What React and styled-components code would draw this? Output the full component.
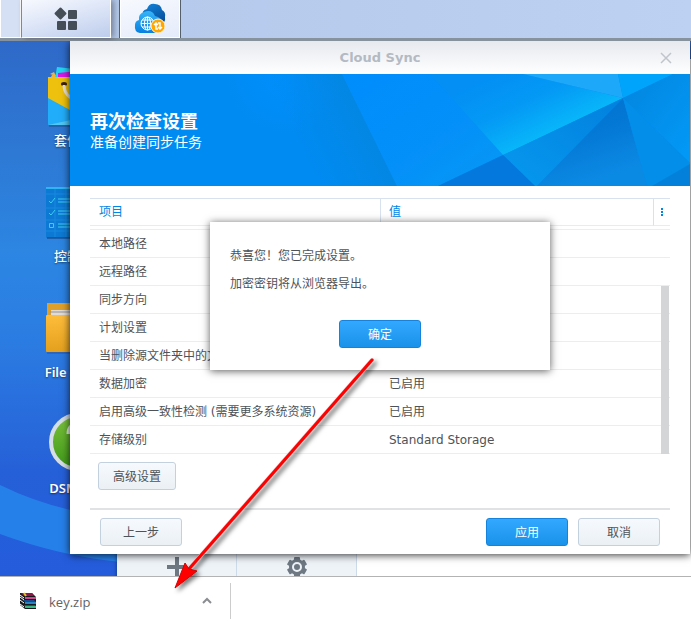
import React, { Component } from 'react';
import styled, { createGlobalStyle } from 'styled-components';

const GlobalStyle = createGlobalStyle`
  * {
    box-sizing: border-box;
  }

  body {
    margin: 0;
    background: #fff;
    color: #4d5359;
    font-family: 'DejaVu Sans', 'Noto Sans CJK SC', sans-serif;
    font-size: 12px;
    line-height: 16px;
  }

  button {
    font: inherit;
    color: inherit;
    padding: 0;
    cursor: pointer;
  }
`;

const Page = styled.div`
  position: relative;
  display: flex;
  flex-direction: column;
  min-height: 100vh;
`;

const Taskbar = styled.nav`
  display: flex;
  height: 41px;
  background: linear-gradient(90deg, #b3c8ea, #bdd2f2);
  border-bottom: 3px solid #87929f;
`;

const TaskGrip = styled.div`
  width: 21px;
  border: solid #fff;
  border-width: 0 1px 1px;
  background: #d5e0f5;
`;

const TaskButton = styled.button`
  display: flex;
  align-items: center;
  justify-content: center;
  width: 90px;
  margin-right: 8px;
  border: solid #fff;
  border-width: 0 1px 1px;
  border-left-color: #7e8899;
  background: linear-gradient(165deg, #f7f9fe, #dbe4f7 50%, #becdec);
  box-shadow: 3px 0 6px rgba(0, 0, 0, 0.35);
`;

const ActiveTaskButton = styled(TaskButton)`
  width: 62px;
  border: solid #555e6b;
  border-width: 0 1px;
  background: linear-gradient(165deg, #f7f9fe, #e4ebfa);
  box-shadow: inset 1px -1px #fff, inset -1px 0 #fff;
`;

const Desktop = styled.main`
  position: relative;
  flex: 1;
  overflow: hidden;
  background: linear-gradient(180deg, #2f69c8 0, #2d79d4 110px, #2c86e2 210px, #2b7ce2 300px, #2660d8 430px, #245cdc 100%);
`;

const Wallpaper = styled.svg`
  position: absolute;
  left: 0;
  bottom: 0;
`;

const Shortcuts = styled.ul`
  position: absolute;
  top: 20px;
  left: 40px;
  width: 80px;
  margin: 0;
  padding: 0;
  list-style: none;
`;

const Shortcut = styled.li`
  display: flex;
  flex-direction: column;
  align-items: center;
  gap: 5px;
  height: 116px;
  color: #fff;
  font-family: 'Noto Sans', 'Noto Sans CJK SC', sans-serif;
  font-size: 13px;
  font-weight: 500;
  white-space: nowrap;
  text-shadow: 0 1px 2px rgba(0, 0, 0, 0.5);

  &:lang(en) {
    font-weight: 600;
  }
`;

const BackWindow = styled.div`
  position: absolute;
  top: 18px;
  right: 0;
  bottom: -6px;
  left: 117px;
  display: flex;
  align-items: flex-end;
  background: #fff;
  box-shadow: 0 0 4px rgba(0, 0, 0, 0.5);
`;

const ToolCell = styled.button`
  display: flex;
  align-items: center;
  justify-content: center;
  width: 120px;
  height: 30px;
  border: none;
  border-right: 1px solid #cddaea;
  background: #eef3f8;
`;

const Window = styled.section`
  position: relative;
  margin: 0 1px 22px 70px;
  background: #fff;
  box-shadow: 0 1px 8px rgba(0, 0, 0, 0.8);
`;

const TitleBar = styled.header`
  position: relative;
  display: flex;
  align-items: center;
  justify-content: center;
  height: 33px;
  background: linear-gradient(#e6e9ef, #fff);
`;

const WindowTitle = styled.h1`
  margin: 0;
  color: #b3bac3;
  font-size: 13px;
`;

const CloseButton = styled.button`
  position: absolute;
  right: 18px;
  display: flex;
  border: none;
  background: none;
`;

const Banner = styled.div`
  position: relative;
  display: flex;
  flex-direction: column;
  justify-content: center;
  height: 112px;
  padding: 4px 20px 0;
  background: #008bf2;
  color: #fff;
`;

const BannerArt = styled.svg`
  position: absolute;
  inset: 0;
  width: 100%;
  height: 100%;
`;

const BannerTitle = styled.h2`
  position: relative;
  margin: 0;
  font-size: 18px;
  line-height: 20px;
`;

const BannerText = styled.p`
  position: relative;
  margin: 0;
  font-size: 14px;
  line-height: 20px;
`;

const Content = styled.div`
  padding: 12px 20px 8px;
`;

const TableWrap = styled.div`
  position: relative;
`;

const Table = styled.table`
  width: 100%;
  table-layout: fixed;
  border-collapse: separate;
  border-spacing: 0;
`;

const HeadCell = styled.th`
  width: ${({ $width }) => $width || 'auto'};
  height: 28px;
  padding: 0 ${({ $divided }) => ($divided ? '8px' : '9px')};
  border: solid #d8e2ee;
  border-width: 1px 0 1px ${({ $divided }) => ($divided ? '1px' : '0')};
  border-bottom-color: #e8ecf0;
  color: #0086e5;
  font-weight: normal;
  text-align: left;
`;

const MenuCell = styled(HeadCell)`
  padding: 0 0 0 6px;
`;

const MenuButton = styled.button`
  display: flex;
  border: none;
  background: none;
`;

const Spacer = styled.td`
  height: 4px;
  padding: 0;
  border-bottom: 1px solid #ebeef1;
`;

const Cell = styled.td`
  height: 28px;
  padding: 0 9px;
  border-bottom: 1px solid #ebeef1;
  white-space: nowrap;
`;

const ScrollThumb = styled.div`
  position: absolute;
  right: 1px;
  bottom: 0;
  width: 8px;
  height: 168px;
  background: #d3d5d7;
`;

const Button = styled.button`
  width: ${({ $narrow }) => ($narrow ? '78px' : '82px')};
  height: 28px;
  padding-top: 2px;
  border: 1px solid ${({ $primary }) => ($primary ? '#1583db' : '#c3d0de')};
  border-radius: 3px;
  background: ${({ $primary }) => ($primary
    ? 'linear-gradient(#33a8ff, #1a92ea)'
    : 'linear-gradient(#f6faff, #ebf0f5)')};
  color: ${({ $primary }) => ($primary ? '#fff' : '#4d5359')};
`;

const Advanced = styled.div`
  padding: 8px 8px 18px;
`;

const Footer = styled.footer`
  display: flex;
  gap: 10px;
  padding: 8px 10px 0;
  border-top: 2px solid #e0e2e4;
`;

const Push = styled.div`
  flex: 1;
`;

const Dialog = styled.div`
  position: absolute;
  top: 181px;
  left: calc(50% - 170px);
  width: 340px;
  padding: 20px 20px 22px;
  background: #fff;
  box-shadow: 0 1px 8px rgba(0, 0, 0, 0.65);
`;

const Message = styled.p`
  margin: 0;
  line-height: 28px;
`;

const DialogActions = styled.div`
  display: flex;
  justify-content: center;
  padding-top: 22px;
`;

const DownloadBar = styled.footer`
  display: flex;
  height: 49px;
  padding: 6px 0;
  border-top: 1px solid #b3b3b3;
  background: #fff;
`;

const Download = styled.div`
  display: flex;
  align-items: center;
  justify-content: space-between;
  width: 231px;
  padding: 0 17px 0 19px;
  border-right: 1px solid #ccc;
`;

const FileLink = styled.a`
  display: flex;
  align-items: flex-end;
  gap: 12px;
  color: #5f6368;
  font-family: 'Open Sans', sans-serif;
  font-size: 13px;
  text-decoration: none;
`;

const PlainButton = styled.button`
  display: flex;
  border: none;
  background: none;
`;

const Arrow = styled.svg`
  position: absolute;
  top: 350px;
  left: 165px;
  pointer-events: none;
`;

const rows = [
  ['本地路径', ''],
  ['远程路径', ''],
  ['同步方向', ''],
  ['计划设置', ''],
  ['当删除源文件夹中的文件', ''],
  ['数据加密', '已启用'],
  ['启用高级一致性检测 (需要更多系统资源)', '已启用'],
  ['存储级别', 'Standard Storage'],
];

const MenuIcon = () => (
  <svg width="24" height="24" viewBox="0 0 24 24" fill="#454d57">
    <rect x="2" y="2" width="9" height="9" rx="1" transform="rotate(45 6.500 6.500)" />
    <rect x="14" y="3" width="9" height="9" rx="1" />
    <rect x="3" y="14" width="9" height="9" rx="1" />
    <rect x="14" y="14" width="9" height="9" rx="1" />
  </svg>
);

const CloudIcon = () => (
  <svg width="32" height="32" viewBox="0 0 32 32">
    <defs>
      <linearGradient id="cloudFront" x2="0" y2="1">
        <stop offset="0" stopColor="#36b5f8" />
        <stop offset="1" stopColor="#087fe0" />
      </linearGradient>
      <linearGradient id="cloudBack" x2="0.600" y2="1">
        <stop offset="0" stopColor="#1286dd" />
        <stop offset="1" stopColor="#07509f" />
      </linearGradient>
    </defs>
    <path d="M9 14Q7 7 13 6Q15 0 21 1Q27 1 28 7Q32 9 31 14Q32 20 26 21Z" fill="url(#cloudBack)" />
    <path d="M6 30Q0 29 1 22Q1 18 5 17Q4 11 10 9Q18 6 21 13Q28 14 28 21Q29 29 22 30Z" fill="url(#cloudFront)" />
    <g fill="none" stroke="#fff" strokeWidth="1">
      <circle cx="13.500" cy="20.500" r="6.500" />
      <ellipse cx="13.500" cy="20.500" rx="3" ry="6.500" />
      <path d="M13.500 14v13M7 20.500h13M8 17h11M8 24h11" />
    </g>
    <circle cx="24" cy="23" r="7" fill="#ffa700" stroke="#fff2d2" />
    <path d="M20 22l2-2 2 2M22 20v6h2M28 24l-2 2-2-2M26 26v-6h-2" fill="none" stroke="#fff" strokeWidth="1.500" />
  </svg>
);

const PackageIcon = () => (
  <svg width="64" height="66" viewBox="0 0 64 66">
    <path d="M2 13l4-2 2 4M4 14h4v4H2z" fill="#efb43a" />
    <path d="M9 6l44 5v12H6z" fill="#23d4f2" />
    <path d="M10 12l40-4v12H10z" fill="#d818e8" />
    <rect x="0" y="16" width="64" height="48" rx="1" fill="#22adfa" />
    <path d="M0 16h64v42L22 49L0 37z" fill="#edc10d" />
    <path d="M64 50L0 64h64z" fill="#50c7f5" />
    <ellipse cx="16" cy="23" rx="3" ry="2" fill="#3b2110" />
    <path d="M16 24C16 30 20 39 31 39S47 30 47 24" fill="none" stroke="#e9e2d4" strokeWidth="3" />
    <path d="M1 65h63" stroke="#18518e" />
  </svg>
);

const ControlIcon = () => (
  <svg width="68" height="66" viewBox="0 0 68 66">
    <rect y="10" width="68" height="51" rx="1" fill="#0c79d4" />
    <path d="M0 11h68" stroke="#30b5f3" strokeWidth="2" />
    <path d="M0 17h68M0 31h68M0 43h68M0 54h68M9 12v48M20 12v48" stroke="#168ae0" />
    <g fill="none" stroke="#3ccdf0" strokeWidth="1">
      <path d="M3 24l2 2 4-5M12 22h30M12 25h24M3 36l2 2 4-5M12 34h30M12 37h24M3.500 46.500h4v4h-4zM12 47h30M12 50h24" />
    </g>
    <path d="M1 61h67" stroke="#0b3d7b" />
  </svg>
);

const FolderIcon = () => (
  <svg width="68" height="66" viewBox="0 0 68 66">
    <defs>
      <linearGradient id="folder" x2="0" y2="1">
        <stop offset="0" stopColor="#ffbd3c" />
        <stop offset="1" stopColor="#e2a01d" />
      </linearGradient>
    </defs>
    <path d="M1 10h27l3 4h36v14H1z" fill="#dfa02a" />
    <path d="M5 17h60v7H5z" fill="#dedbd8" />
    <path d="M4 19h62" stroke="#9b938c" />
    <rect y="22" width="68" height="37" rx="1" fill="url(#folder)" />
    <path d="M1 60h66" stroke="#31539a" />
  </svg>
);

const HelpIcon = () => (
  <svg width="62" height="66" viewBox="0 0 62 66">
    <defs>
      <linearGradient id="help" x2="0" y2="1">
        <stop offset="0" stopColor="#7cc23c" />
        <stop offset="1" stopColor="#3d9718" />
      </linearGradient>
    </defs>
    <circle cx="29" cy="34" r="28" fill="#24549b" />
    <circle cx="29" cy="33" r="27" fill="url(#help)" stroke="#d5dee7" strokeWidth="4" />
    <path d="M20 25q0-9 9-9 9 0 9 8 0 5-6 8-3 2-3 7M29 44v5" fill="none" stroke="#e9f2e4" strokeWidth="5" />
  </svg>
);

const GearIcon = () => (
  <svg width="20" height="20" viewBox="0 0 20 20">
    <g fill="#6d7883">
      <circle cx="10" cy="10" r="8" />
      {[0, 60, 120].map((angle) => (
        <rect key={angle} x="7" width="6" height="20" rx="1" transform={`rotate(${angle} 10 10)`} />
      ))}
    </g>
    <circle cx="10" cy="10" r="4" fill="#6d7883" stroke="#eef3f8" strokeWidth="2" />
  </svg>
);

const ArchiveIcon = () => (
  <svg width="18" height="18" viewBox="0 0 18 18">
    <path d="M1 1h12l4 4v12H6L1 13z" fill="#17191c" />
    <path d="M2 1h11l2 3H5z" fill="#8d1747" />
    <path d="M6 5h11v2H6z" fill="#d0488a" />
    <path d="M4 8h11l2 2H6z" fill="#124f91" />
    <path d="M6 10h11v2H6z" fill="#2783c4" />
    <path d="M4 13h12l1 1H6z" fill="#0e6347" />
    <path d="M6 14h11v2H6z" fill="#37b886" />
    <path d="M1 3l4 3M1 5l4 3M1 8l4 3M1 12l4 3" stroke="#fff" />
    <path d="M5 1l2 3" stroke="#e5c51b" strokeWidth="2" />
  </svg>
);

// light triangles of the wizard banner, anchored to its right edge
const BannerShapes = () => (
  <BannerArt viewBox="0 0 620 112" preserveAspectRatio="xMaxYMid slice">
    <defs>
      <radialGradient id="glow" gradientUnits="userSpaceOnUse" cx="215" cy="0" r="60">
        <stop offset="0" stopColor="#008ffd" />
        <stop offset="1" stopColor="#008ffd" stopOpacity="0" />
      </radialGradient>
      <linearGradient id="edge" gradientUnits="userSpaceOnUse" x1="235" y1="80" x2="312" y2="42">
        <stop offset="0" stopColor="#0486e0" stopOpacity="0" />
        <stop offset="1" stopColor="#0486e0" />
      </linearGradient>
      <linearGradient id="wide" x2="1" y2="1">
        <stop offset="0" stopColor="#008dfd" />
        <stop offset="0.600" stopColor="#0490f8" />
        <stop offset="1" stopColor="#0699f5" />
      </linearGradient>
      <linearGradient id="bright" gradientUnits="userSpaceOnUse" x1="420" y1="0" x2="455" y2="74">
        <stop offset="0" stopColor="#038ff4" />
        <stop offset="0.500" stopColor="#0499f5" />
        <stop offset="1" stopColor="#08b8fa" />
      </linearGradient>
      <linearGradient id="lower" x1="1" x2="0" y2="1">
        <stop offset="0" stopColor="#0280de" />
        <stop offset="1" stopColor="#0699f0" />
      </linearGradient>
      <linearGradient id="deep" x2="0.400" y2="1">
        <stop offset="0" stopColor="#006fcd" />
        <stop offset="0.500" stopColor="#0478d5" />
        <stop offset="1" stopColor="#0b8ae4" />
      </linearGradient>
      <linearGradient id="corner" x2="1" y2="1">
        <stop offset="0" stopColor="#0285df" />
        <stop offset="1" stopColor="#029af7" />
      </linearGradient>
    </defs>
    <path d="M150 0H272L327 112H150z" fill="url(#glow)" />
    <path d="M200 0H272L327 112H200z" fill="url(#edge)" />
    <path d="M272 0H360L433 81L368 112H327z" fill="url(#wide)" />
    <path d="M360 0H453L553 24L433 81z" fill="url(#bright)" />
    <path d="M453 0H548L553 24z" fill="#1ea8f9" />
    <path d="M548 0H603L553 24z" fill="#00a5fb" />
    <path d="M603 0H620V89L553 24z" fill="url(#corner)" />
    <path d="M433 81L553 24L467 112H465z" fill="url(#lower)" />
    <path d="M368 112L433 81L465 112z" fill="#0478dc" />
    <path d="M553 24L467 112H577z" fill="url(#deep)" />
    <path d="M553 24L620 89V112H577z" fill="#038ee9" />
    <path d="M582 112L620 90V112z" fill="#0381da" />
  </BannerArt>
);

class App extends Component {
  constructor() {
    super();
    this.state = { dialogOpen: true };
    this.closeDialog = this.closeDialog.bind(this);
  }

  closeDialog() {
    this.setState({ dialogOpen: false });
  }

  render() {
    const { dialogOpen } = this.state;
    return (
      <Page lang="zh-CN">
        <GlobalStyle />
        <Taskbar>
          <TaskGrip />
          <TaskButton><MenuIcon /></TaskButton>
          <ActiveTaskButton><CloudIcon /></ActiveTaskButton>
        </Taskbar>
        <Desktop>
          <Wallpaper width="120" height="100" viewBox="0 0 120 100">
            <path d="M0 9Q55 36 120 42V86Q60 80 0 58z" fill="#2680ea" />
          </Wallpaper>
          <Shortcuts>
            <Shortcut>
              <PackageIcon />
              套件中心
            </Shortcut>
            <Shortcut>
              <ControlIcon />
              控制面板
            </Shortcut>
            <Shortcut lang="en">
              <FolderIcon />
              File Station
            </Shortcut>
            <Shortcut lang="en">
              <HelpIcon />
              DSM Help
            </Shortcut>
          </Shortcuts>
          <BackWindow>
            <ToolCell>
              <svg width="20" height="20" viewBox="0 0 20 20">
                <path d="M10 0v20M0 10h20" stroke="#6d7883" strokeWidth="4" />
              </svg>
            </ToolCell>
            <ToolCell><GearIcon /></ToolCell>
          </BackWindow>
          <Window>
            <TitleBar>
              <WindowTitle>Cloud Sync</WindowTitle>
              <CloseButton>
                <svg width="12" height="12" viewBox="0 0 12 12">
                  <path d="M1 1l10 10M11 1L1 11" stroke="#c0c5cb" strokeWidth="1.500" />
                </svg>
              </CloseButton>
            </TitleBar>
            <Banner>
              <BannerShapes />
              <BannerTitle>再次检查设置</BannerTitle>
              <BannerText>准备创建同步任务</BannerText>
            </Banner>
            <Content>
              <TableWrap>
                <Table>
                  <thead>
                    <tr>
                      <HeadCell $width="50%">项目</HeadCell>
                      <HeadCell $divided>值</HeadCell>
                      <MenuCell $divided $width="17px">
                        <MenuButton>
                          <svg width="4" height="8" viewBox="0 0 4 8" fill="#0086e5">
                            <path d="M1 0h2v2H1zM1 3h2v2H1zM1 6h2v2H1z" />
                          </svg>
                        </MenuButton>
                      </MenuCell>
                    </tr>
                  </thead>
                  <tbody>
                    <tr><Spacer colSpan={3} /></tr>
                    {rows.map(([name, value]) => (
                      <tr key={name}>
                        <Cell>{name}</Cell>
                        <Cell colSpan={2}>{value}</Cell>
                      </tr>
                    ))}
                  </tbody>
                </Table>
                <ScrollThumb />
              </TableWrap>
              <Advanced>
                <Button $narrow>高级设置</Button>
              </Advanced>
              <Footer>
                <Button>上一步</Button>
                <Push />
                <Button $primary>应用</Button>
                <Button>取消</Button>
              </Footer>
            </Content>
            {dialogOpen && (
              <Dialog role="dialog">
                <Message>恭喜您！您已完成设置。</Message>
                <Message>加密密钥将从浏览器导出。</Message>
                <DialogActions>
                  <Button $primary onClick={this.closeDialog}>确定</Button>
                </DialogActions>
              </Dialog>
            )}
          </Window>
        </Desktop>
        <DownloadBar>
          <Download>
            <FileLink href="#key.zip">
              <ArchiveIcon />
              key.zip
            </FileLink>
            <PlainButton>
              <svg width="12" height="8" viewBox="0 0 12 8">
                <path d="M2 6l4-4 4 4" fill="none" stroke="#8a8d90" strokeWidth="2" />
              </svg>
            </PlainButton>
          </Download>
        </DownloadBar>
        <Arrow width="230" height="250" viewBox="0 0 230 250">
          <defs>
            <filter id="arrowShadow">
              <feDropShadow dx="3" dy="3" stdDeviation="2" floodOpacity="0.500" />
            </filter>
          </defs>
          <g filter="url(#arrowShadow)">
            <path d="M207 10L24 219" stroke="#d9b5b5" strokeWidth="4" strokeLinecap="round" />
            <path d="M207 10L24 219" stroke="#f00" strokeWidth="3" strokeLinecap="round" />
            <path d="M10 238L20 213L24 219L32 221z" fill="#f00" stroke="#d20000" />
          </g>
        </Arrow>
      </Page>
    );
  }
}

export default App;
